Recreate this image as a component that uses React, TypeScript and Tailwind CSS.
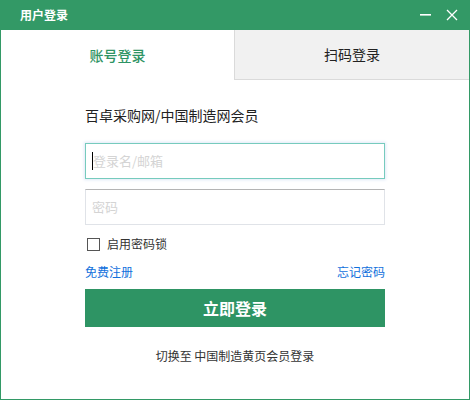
import React from "react";

export default function App() {
  const font = { fontFamily: '"Noto Sans CJK SC", "Noto Sans", sans-serif' };
  return (
    <div className="w-[470px] h-[400px] bg-[#339966] flex flex-col" style={font}>
      <div className="h-[30px] flex items-center pl-[20px] pr-[12px] shrink-0">
        <span className="text-[12px] font-bold text-white leading-none">用户登录</span>
        <div className="ml-auto flex items-center gap-[14px]">
          <svg width="12" height="12" viewBox="0 0 12 12">
            <rect x="0" y="5" width="11" height="1.6" fill="#fff" />
          </svg>
          <svg width="12" height="12" viewBox="0 0 12 12">
            <path d="M1 1 L11 11 M11 1 L1 11" stroke="#fff" strokeWidth="1.3" />
          </svg>
        </div>
      </div>
      <div className="flex-1 mx-px mb-px bg-white flex flex-col">
        <div className="h-[50px] flex shrink-0">
          <div className="w-[233px] flex items-center justify-center text-[14px] font-medium text-[#2e9464]">账号登录</div>
          <div className="flex-1 flex items-center justify-center text-[14px] text-[#222] bg-[#f1f1f1] border-l border-b border-[#dadada]">扫码登录</div>
        </div>
        <div className="pl-[84px] w-[384px] flex flex-col">
          <div className="mt-[25px] text-[14px] leading-[20px] text-[#222]">百卓采购网/中国制造网会员</div>
          <div className="mt-[18px] h-[36px] border border-[#76cbbd] shadow-[0_0_3px_1px_#dfe9f7] flex items-center pl-[6px]">
            <span className="w-px h-[18px] bg-black" />
            <span className="text-[13px] text-[#d4d4d4]">登录名/邮箱</span>
          </div>
          <div className="mt-[10px] h-[36px] border border-[#e0e3e8] border-t-[#b4b4b4] flex items-center pl-[6px]">
            <span className="text-[13px] text-[#d4d4d4]">密码</span>
          </div>
          <div className="mt-[12px] flex items-center h-[14px] pl-[2px]">
            <span className="w-[13px] h-[13px] border border-[#555] bg-white" />
            <span className="ml-[7px] text-[12px] text-[#333]">启用密码锁</span>
          </div>
          <div className="mt-[13px] flex justify-between text-[12px] leading-[16px] text-[#1070dc]">
            <span>免费注册</span>
            <span>忘记密码</span>
          </div>
          <div className="mt-[9px] h-[38px] bg-[#2e9464] flex items-center justify-center text-white text-[16px] font-bold">立即登录</div>
          <div className="mt-[21px] text-center text-[12px] leading-[16px] text-[#333]">切换至 中国制造黄页会员登录</div>
        </div>
      </div>
    </div>
  );
}
